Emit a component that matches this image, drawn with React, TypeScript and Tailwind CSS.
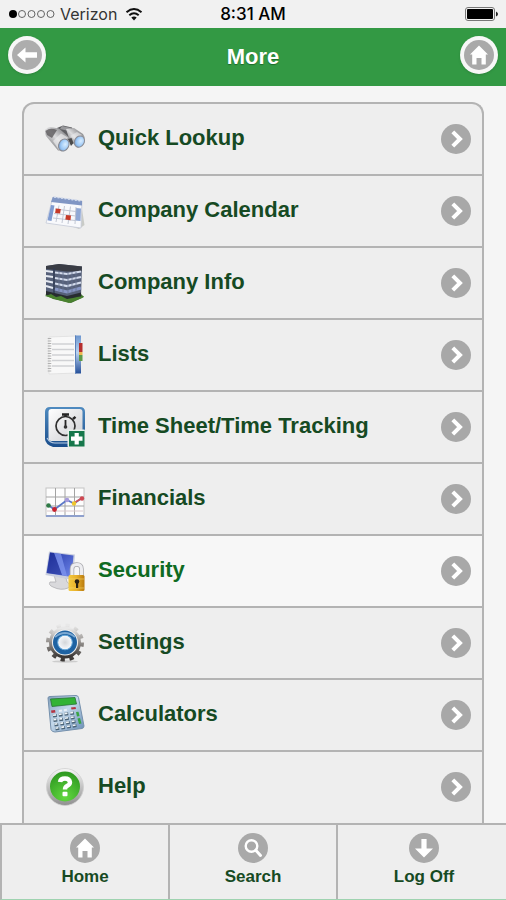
import { ReactNode } from "react";

type MenuItem = {
  title: string;
  icon: ReactNode;
  active?: boolean;
};

const BackIcon = () => (
  <svg viewBox="0 0 30 30" className="h-[30px] w-[30px]" aria-hidden="true">
    <circle cx="15" cy="15" r="15" fill="#adadad" />
    <path d="M5 15 13.5 7.5V12.2H25V17.8H13.5V22.5Z" fill="#fff" />
  </svg>
);

const HomeIcon = () => (
  <svg viewBox="0 0 30 30" className="h-[30px] w-[30px]" aria-hidden="true">
    <circle cx="15" cy="15" r="15" fill="#a9a9a9" />
    <path d="M15 5.5 24 14.5H21.8V24.5H17.5V18H12.5V24.5H8.2V14.5H6Z" fill="#fff" />
  </svg>
);

const SearchIcon = () => (
  <svg viewBox="0 0 30 30" className="h-[30px] w-[30px]" aria-hidden="true">
    <circle cx="15" cy="15" r="15" fill="#a9a9a9" />
    <circle cx="13.5" cy="13" r="5.8" fill="none" stroke="#fff" strokeWidth="2.4" />
    <path d="M17.8 17.3 22.5 22.5" stroke="#fff" strokeWidth="3" strokeLinecap="round" />
  </svg>
);

const LogOffIcon = () => (
  <svg viewBox="0 0 30 30" className="h-[30px] w-[30px]" aria-hidden="true">
    <circle cx="15" cy="15" r="15" fill="#a9a9a9" />
    <path d="M12.4 6H17.6V15.5H24L15 24.5 6 15.5H12.4Z" fill="#fff" />
  </svg>
);

const ChevronIcon = () => (
  <svg viewBox="0 0 30 30" className="h-[30px] w-[30px] shrink-0" aria-hidden="true">
    <circle cx="15" cy="15" r="15" fill="#a8a8a8" />
    <path d="M11.8 7.8 19 15 11.8 22.2" fill="none" stroke="#fff" strokeWidth="4" />
  </svg>
);

const BinocularsIcon = () => (
  <svg viewBox="0 0 40 40" className="h-10 w-10" aria-hidden="true">
    <defs>
      <linearGradient id="barrel" x1="0" y1="1" x2="1" y2="0">
        <stop offset="0" stopColor="#4c4c4f" />
        <stop offset="0.5" stopColor="#dcdcde" />
        <stop offset="1" stopColor="#5a5a5d" />
      </linearGradient>
      <radialGradient id="lens" cx="0.6" cy="0.4" r="0.7">
        <stop offset="0" stopColor="#d9edff" />
        <stop offset="0.6" stopColor="#9cc8f5" />
        <stop offset="1" stopColor="#6b92c6" />
      </radialGradient>
    </defs>
    <path d="M12 9 18 6.5 27 8.500 30 14 22 19 14 15Z" fill="#606063" />
    <path d="M17 7 26 9 24 12 15 10Z" fill="#98989b" />
    <path d="M21 10 29 9 38 15Q41.500 20 38.500 26L33 28.500 25 22Z" fill="url(#barrel)" />
    <path d="M0.500 10.500Q3 7.500 8 8.500L14 9.500 25 19 20 32 13 31.500 1 17Q-0.500 13 0.500 10.500Z" fill="url(#barrel)" />
    <path d="M0.500 12Q5 8 12 11L7 19 2 16Z" fill="#5b595b" opacity="0.800" />
    <path d="M8 22 16 14.500 23 18.500 14 31Z" fill="#ececee" opacity="0.650" />
    <path d="M25 17 32 13 37 16 30 21Z" fill="#ececee" opacity="0.550" />
    <path d="M23 20 26.500 19 28.500 24 26 27Z" fill="#4a4a4a" />
    <ellipse cx="18.800" cy="26" rx="5" ry="6.300" transform="rotate(28 18.800 26)" fill="url(#lens)" stroke="#85878f" strokeWidth="1" />
    <ellipse cx="34.400" cy="22.600" rx="4.800" ry="5.900" transform="rotate(28 34.400 22.600)" fill="url(#lens)" stroke="#8a8c94" strokeWidth="1" />
  </svg>
);

const CalendarIcon = () => (
  <svg viewBox="0 0 40 40" className="h-10 w-10" aria-hidden="true">
    <path d="M36 12 39.500 34 34 38 22 34Z" fill="#c9cbc7" />
    <path d="M8 6 37 10 36 37 1 32Z" fill="#f8f9fc" stroke="#c5cad8" strokeWidth="0.800" />
    <path d="M7.800 6 37 10V14.500L6 11Z" fill="#8096c4" />
    <path d="M9 6 36 9.800" stroke="#d5deef" strokeWidth="1.500" strokeDasharray="2 1.500" />
    <path d="M6 14 9.500 14.400 6.500 30 2.500 29.300Z" fill="#7f9bd0" />
    <path d="M31 17 36 17.500 35.500 30 30 29.500Z" fill="#90a8d5" />
    <path d="M10 18 31 20.500M9 22.500 31 25M8 27 30 29.500M14 14.500 11 31M19.500 15 17 32M25.500 15.500 23 33M31 16 30 33" stroke="#bcc2cf" strokeWidth="0.900" fill="none" />
    <path d="M10.800 17.500 15.800 18.100 15.100 22.500 10.100 21.900Z" fill="#c63a28" />
    <path d="M21 24 26 24.500 25.500 29.200 20.300 28.500Z" fill="#c63a28" />
  </svg>
);

const BuildingIcon = () => (
  <svg viewBox="0 0 40 40" className="h-10 w-10" aria-hidden="true">
    <path d="M0 32 7 29 35 30 39 34 26 40 8 36Z" fill="#3d6f2b" />
    <path d="M1 3 14 1 37 3.500 36 34 23 37 1 31Z" fill="#566079" />
    <path d="M1 3 14 1 37 3.500 36.500 8 22 8.500 1 6Z" fill="#393c44" />
    <path d="M9 5 9 33" stroke="#303b54" strokeWidth="1.500" />
    <path d="M1 8 8 9M1 13 8 14M1 18 8 19.500M1 23 8 25" stroke="#e5eaf3" strokeWidth="2" />
    <path d="M10 9.500 22 11 36 8.500M10 15 22 17 36 14M10 20.500 22 23 36 19.500" fill="none" stroke="#d4dced" strokeWidth="2.200" />
    <path d="M10 26 22 29 36 25" fill="none" stroke="#8695c4" strokeWidth="3" />
    <path d="M14 8V28M18 9V29M23 9V31M27 9V29M31 9V28" stroke="#66728f" strokeWidth="0.800" />
    <path d="M1 28 22 33 36 29.500V34L22 38 1 32Z" fill="#272c30" />
    <path d="M0 33 6 31 11 34 16 33 22 36 28 35 32 34 39 33 37 35 24 40 10 36Z" fill="#49812f" />
  </svg>
);

const ListsIcon = () => (
  <svg viewBox="0 0 40 40" className="h-10 w-10" aria-hidden="true">
    <defs>
      <linearGradient id="cover" x1="0" y1="0" x2="0" y2="1">
        <stop offset="0" stopColor="#6c96cf" />
        <stop offset="0.450" stopColor="#b9d2ef" />
        <stop offset="1" stopColor="#254f99" />
      </linearGradient>
    </defs>
    <path d="M4 2 32 1V38L4 39Z" fill="#f8f8f8" stroke="#dedede" strokeWidth="0.800" />
    <path d="M7 9H29M7 14.500H29M7 20H29M7 25.500H29M7 31H29" stroke="#d0d1d4" strokeWidth="1.500" />
    <path d="M4.500 3V38" stroke="#b0b0b0" strokeWidth="3.500" strokeDasharray="1 1.500" />
    <path d="M30 0.500H36V38.500H30Z" fill="url(#cover)" />
    <path d="M30.500 0.500V38.500" stroke="#5a80ba" strokeWidth="1" />
    <path d="M34 8H37.500V17H34Z" fill="#b62f2e" />
    <path d="M34 17H37.500V20H34Z" fill="#edb84e" />
    <path d="M34 20H37.500V26H34Z" fill="#5f9b49" />
  </svg>
);

const TimeIcon = () => (
  <svg viewBox="0 0 40 40" className="h-10 w-10" aria-hidden="true">
    <defs>
      <linearGradient id="tile" x1="0" y1="0" x2="1" y2="1">
        <stop offset="0" stopColor="#fff" />
        <stop offset="1" stopColor="#cdced2" />
      </linearGradient>
      <linearGradient id="tileEdge" x1="0" y1="0" x2="0" y2="1">
        <stop offset="0" stopColor="#4f8bc0" />
        <stop offset="1" stopColor="#194d8c" />
      </linearGradient>
    </defs>
    <path d="M5 0H35Q40 0 40 5V35Q40 40 35 40H8Q0 37 0 32V5Q0 0 5 0Z" fill="url(#tileEdge)" />
    <path d="M2 31Q5 36 10 36H24" stroke="#b8cce4" strokeWidth="1.200" fill="none" />
    <rect x="3.500" y="2" width="34" height="32" rx="3" fill="url(#tile)" />
    <circle cx="20.500" cy="19" r="9.500" fill="none" stroke="#303030" strokeWidth="1.700" />
    <path d="M20.500 10V7M17 7.500H24M28 12 30.500 9.800" stroke="#252525" strokeWidth="2.400" />
    <path d="M20.500 13V21" stroke="#252525" strokeWidth="1.800" />
    <circle cx="20.500" cy="20" r="1.800" fill="#333" />
    <rect x="22.500" y="22.500" width="17.500" height="17.500" rx="1" fill="#e8f0ea" />
    <rect x="24" y="24" width="15.500" height="15.500" fill="#16774b" />
    <path d="M31.700 26V37.500M26 31.700H37.500" stroke="#fff" strokeWidth="4.200" />
  </svg>
);

const ChartIcon = () => (
  <svg viewBox="0 0 40 40" className="h-10 w-10" aria-hidden="true">
    <rect x="1" y="9" width="38" height="28" fill="#fdfdfd" stroke="#c4c4c4" strokeWidth="1" />
    <path d="M10.500 9V36M20 9V36M29.500 9V36M1 18H39M1 27H39" stroke="#a3a3a3" strokeWidth="1" />
    <path d="M1 37H39" stroke="#8fa0cd" strokeWidth="2" />
    <path d="M2 32H38" stroke="#d9c8cc" strokeWidth="1" />
    <path d="M3 26 9.500 30.500 22 21 29 24.500 37 19" fill="none" stroke="#5b78c8" strokeWidth="1.800" />
    <path d="M29 24 37 19" stroke="#d1555b" strokeWidth="1.500" />
    <circle cx="3.500" cy="26.500" r="2.300" fill="#2f7a46" />
    <circle cx="9.500" cy="30.500" r="2.400" fill="#c8222e" />
    <circle cx="22" cy="21" r="2.300" fill="#a59adb" />
    <circle cx="29" cy="24.500" r="2.200" fill="#efc72e" />
    <circle cx="37" cy="19.500" r="2.200" fill="#cf4852" />
  </svg>
);

const SecurityIcon = () => (
  <svg viewBox="0 0 40 40" className="h-10 w-10" aria-hidden="true">
    <defs>
      <linearGradient id="screen" x1="0" y1="0" x2="1" y2="1">
        <stop offset="0" stopColor="#2336a5" />
        <stop offset="1" stopColor="#6e86ea" />
      </linearGradient>
      <linearGradient id="lockBody" x1="0" y1="0" x2="1" y2="0">
        <stop offset="0" stopColor="#f4ca3f" />
        <stop offset="0.500" stopColor="#e8b02a" />
        <stop offset="1" stopColor="#b97a0e" />
      </linearGradient>
    </defs>
    <path d="M9 24 21 27 22 31Q27 34 23 37Q16 40 8 36Q3 34 5 31L11 31Z" fill="#d9d9dc" stroke="#b0b0b4" strokeWidth="0.800" />
    <path d="M4 0.500 30 3.500 28 29 0.500 24Z" fill="#c9cede" />
    <path d="M5 1.500 28.500 4.500 26.500 26 1.500 22Z" fill="url(#screen)" />
    <path d="M9 2 16 3 22 25 17 24Z" fill="#8298f1" opacity="0.700" />
    <path d="M5 1.500 9 2 17 24 2 22Z" fill="#18268c" opacity="0.500" />
    <path d="M27 26V18Q27 13.500 31.700 13.500T36.500 18V26" fill="none" stroke="#a6a6ab" strokeWidth="4.500" />
    <path d="M27 26V18Q27 13.500 31.700 13.500T36.500 18V26" fill="none" stroke="#ededf0" strokeWidth="3" />
    <rect x="23.500" y="24" width="16" height="16" rx="1.500" fill="url(#lockBody)" />
    <path d="M24 28H39M24 37H39" stroke="#f6db78" strokeWidth="0.800" opacity="0.700" />
    <circle cx="32" cy="30.500" r="2.300" fill="#2a2012" />
    <path d="M31 31H33.200V37H31Z" fill="#2a2012" />
  </svg>
);

const SettingsIcon = () => (
  <svg viewBox="0 0 40 40" className="h-10 w-10" aria-hidden="true">
    <defs>
      <linearGradient id="gear" x1="0" y1="0" x2="0" y2="1">
        <stop offset="0" stopColor="#e8e8e8" />
        <stop offset="0.500" stopColor="#928e8b" />
        <stop offset="1" stopColor="#3c3836" />
      </linearGradient>
      <radialGradient id="hub" cx="0.500" cy="0.500" r="0.500">
        <stop offset="0" stopColor="#d3d6d9" />
        <stop offset="1" stopColor="#f8fbff" />
      </radialGradient>
    </defs>
    <ellipse cx="20" cy="38.500" rx="13" ry="1.200" fill="#cccccc" />
    <circle cx="20" cy="19.500" r="17" fill="none" stroke="url(#gear)" strokeWidth="4" strokeDasharray="4.200 4.700" />
    <circle cx="20" cy="19.500" r="14" fill="none" stroke="url(#gear)" strokeWidth="4" />
    <circle cx="20" cy="19.500" r="13" fill="#f2f2f2" />
    <circle cx="20" cy="19.500" r="12" fill="#1e62a2" />
    <path d="M10 14Q20 6 30 14" fill="none" stroke="#7ca9d2" strokeWidth="2" />
    <circle cx="20" cy="19.500" r="7.300" fill="url(#hub)" stroke="#62a8dc" strokeWidth="1" />
  </svg>
);

const CalculatorIcon = () => (
  <svg viewBox="0 0 40 40" className="h-10 w-10" aria-hidden="true">
    <defs>
      <linearGradient id="calc" x1="0" y1="0" x2="1" y2="1">
        <stop offset="0" stopColor="#7f9db9" />
        <stop offset="0.450" stopColor="#c3d8eb" />
        <stop offset="1" stopColor="#668bb4" />
      </linearGradient>
    </defs>
    <path d="M3 3Q3 1.500 5 1.500L31 0.500Q33 0.500 33.500 2.500L39 31Q39 33 37 33.500L10 37Q7 37 6 34.500Z" fill="url(#calc)" stroke="#7590ac" strokeWidth="1" />
    <path d="M5.500 4 30 2.500 31.500 9 7 11.500Z" fill="#32b335" stroke="#277333" strokeWidth="0.800" />
    <path d="M6 15.500 10 15 10.500 17.500 6.500 18Z" fill="#b53543" />
    <path d="M26 12.500 30.500 12 31 14 26.500 14.500Z" fill="#b53543" />
    <path d="M14 16 24 14.500" stroke="#e8eff6" strokeWidth="2" strokeDasharray="3 2" />
    <path d="M8 21 29 18M8.500 25.500 30 22.500M9.500 30 31 26.500M10.500 34 32 30.500" stroke="#496276" strokeWidth="3" strokeDasharray="3.800 2" />
    <path d="M8 20.300 29 17.300M8.500 24.800 30 21.800M9.500 29.300 31 25.800M10.500 33.300 32 29.800" stroke="#f0f5f7" strokeWidth="1.600" strokeDasharray="3 2.800" />
    <path d="M31 17 33.500 16.700 34.500 21 32 21.500ZM32.500 23.500 35 23 36.500 28.500 34 29Z" fill="#39a343" />
  </svg>
);

const HelpIcon = () => (
  <svg viewBox="0 0 40 40" className="h-10 w-10" aria-hidden="true">
    <defs>
      <linearGradient id="ring" x1="0" y1="0" x2="0" y2="1">
        <stop offset="0" stopColor="#f7f7f7" />
        <stop offset="1" stopColor="#8f8f8f" />
      </linearGradient>
      <radialGradient id="helpFill" cx="0.500" cy="0.850" r="0.800">
        <stop offset="0" stopColor="#62d83f" />
        <stop offset="1" stopColor="#309b22" />
      </radialGradient>
    </defs>
    <circle cx="20" cy="20" r="18.500" fill="url(#ring)" stroke="#cfcfcf" strokeWidth="0.800" />
    <circle cx="20" cy="19.500" r="15" fill="url(#helpFill)" />
    <path d="M15 15Q15.500 11.500 20 11.500T25 15.200Q25 17.500 22 19Q20 20 20 22.500" fill="none" stroke="#fff" strokeWidth="4.400" />
    <rect x="17.500" y="24.800" width="5" height="4.500" rx="1" fill="#fff" />
  </svg>
);

const menuItems: MenuItem[] = [
  { title: "Quick Lookup", icon: <BinocularsIcon /> },
  { title: "Company Calendar", icon: <CalendarIcon /> },
  { title: "Company Info", icon: <BuildingIcon /> },
  { title: "Lists", icon: <ListsIcon /> },
  { title: "Time Sheet/Time Tracking", icon: <TimeIcon /> },
  { title: "Financials", icon: <ChartIcon /> },
  { title: "Security", icon: <SecurityIcon />, active: true },
  { title: "Settings", icon: <SettingsIcon /> },
  { title: "Calculators", icon: <CalculatorIcon /> },
  { title: "Help", icon: <HelpIcon /> },
];

const tabs = [
  { title: "Home", icon: <HomeIcon /> },
  { title: "Search", icon: <SearchIcon /> },
  { title: "Log Off", icon: <LogOffIcon /> },
];

const StatusBar = () => (
  <div className="grid h-7 grid-cols-3 items-center bg-[#f1f1f1] px-2 font-['Inter',sans-serif] text-base font-normal text-black">
    <div className="flex items-center gap-1">
      <svg viewBox="0 0 48 10" className="h-[10px] w-12" aria-hidden="true">
        <circle cx="5" cy="5" r="4" fill="#000" />
        {[14, 23.5, 33, 42.5].map((x) => (
          <circle key={x} cx={x} cy="5" r="3.500" fill="none" stroke="#555" strokeWidth="0.900" />
        ))}
      </svg>
      <span className="text-[#333]">Verizon</span>
      <svg viewBox="0 0 18 14" className="ml-1 h-[14px] w-[18px]" aria-hidden="true">
        <path d="M1.500 5.200Q9-1.200 16.500 5.200" fill="none" stroke="#111" strokeWidth="2" />
        <path d="M4.300 8.300Q9 4.300 13.700 8.300" fill="none" stroke="#111" strokeWidth="2" />
        <path d="M6.300 10.500Q9 8.300 11.700 10.500L9 13.500Z" fill="#111" />
      </svg>
    </div>
    <span className="text-center text-[17px] leading-6 font-medium">8:31 AM</span>
    <svg viewBox="0 0 33 14" className="h-[14px] w-[33px] justify-self-end" aria-hidden="true">
      <rect x="0.500" y="0.500" width="29" height="13" rx="2.500" fill="#f1f1f1" stroke="#777" />
      <rect x="2" y="2" width="26" height="10" rx="1" fill="#000" />
      <path d="M31 4.500Q33 5.500 33 7T31 9.500Z" fill="#222" />
    </svg>
  </div>
);

const App = () => {
  return (
    <div className="flex min-h-screen flex-col bg-[#f5f5f5] font-['Liberation_Sans',Arial,sans-serif] font-bold">
      <StatusBar />
      <header className="flex h-[58px] items-center justify-between bg-[#339944] px-2">
        <button
          type="button"
          aria-label="Back"
          className="mb-1 flex h-[38px] w-[38px] items-center justify-center rounded-full bg-[#f7f7f7] shadow-sm"
        >
          <BackIcon />
        </button>
        <h1 className="text-[22px] leading-6 text-white [text-shadow:0_1px_1px_#1c6a2a]">More</h1>
        <button
          type="button"
          aria-label="Home"
          className="mb-1 flex h-[38px] w-[38px] items-center justify-center rounded-full bg-[#f7f7f7] shadow-sm"
        >
          <HomeIcon />
        </button>
      </header>

      <main className="flex flex-1 flex-col px-[22px] pt-4">
        <ul className="flex-1 overflow-hidden rounded-t-xl border-x-2 border-t-2 border-[#b3b3b3] bg-[#eeeeee]">
          {menuItems.map((item) => (
            <li key={item.title} className="border-b-2 border-[#b3b3b3] last:border-b-0">
              <a
                href="#"
                className={
                  item.active
                    ? "flex h-[70px] items-center gap-[13px] bg-[#f7f7f7] pr-[11px] pl-[21px] text-[#0f6b22]"
                    : "flex h-[70px] items-center gap-[13px] pr-[11px] pl-[21px] text-[#164a23]"
                }
              >
                {item.icon}
                <span className="flex-1 pb-0.5 text-[22px] leading-7">{item.title}</span>
                <ChevronIcon />
              </a>
            </li>
          ))}
        </ul>
      </main>

      <nav className="sticky bottom-0 grid grid-cols-3 divide-x-2 divide-[#b3b3b3] border-t-2 border-b border-l-2 border-t-[#b3b3b3] border-b-[#9fd3b0] border-l-[#b3b3b3] bg-[#eeeeee]">
        {tabs.map((tab) => (
          <a
            key={tab.title}
            href="#"
            className="flex h-[74px] flex-col items-center gap-1 pt-2 text-[17px] leading-5 text-[#164a23] last:pl-1"
          >
            {tab.icon}
            <span>{tab.title}</span>
          </a>
        ))}
      </nav>
    </div>
  );
};

export default App;
